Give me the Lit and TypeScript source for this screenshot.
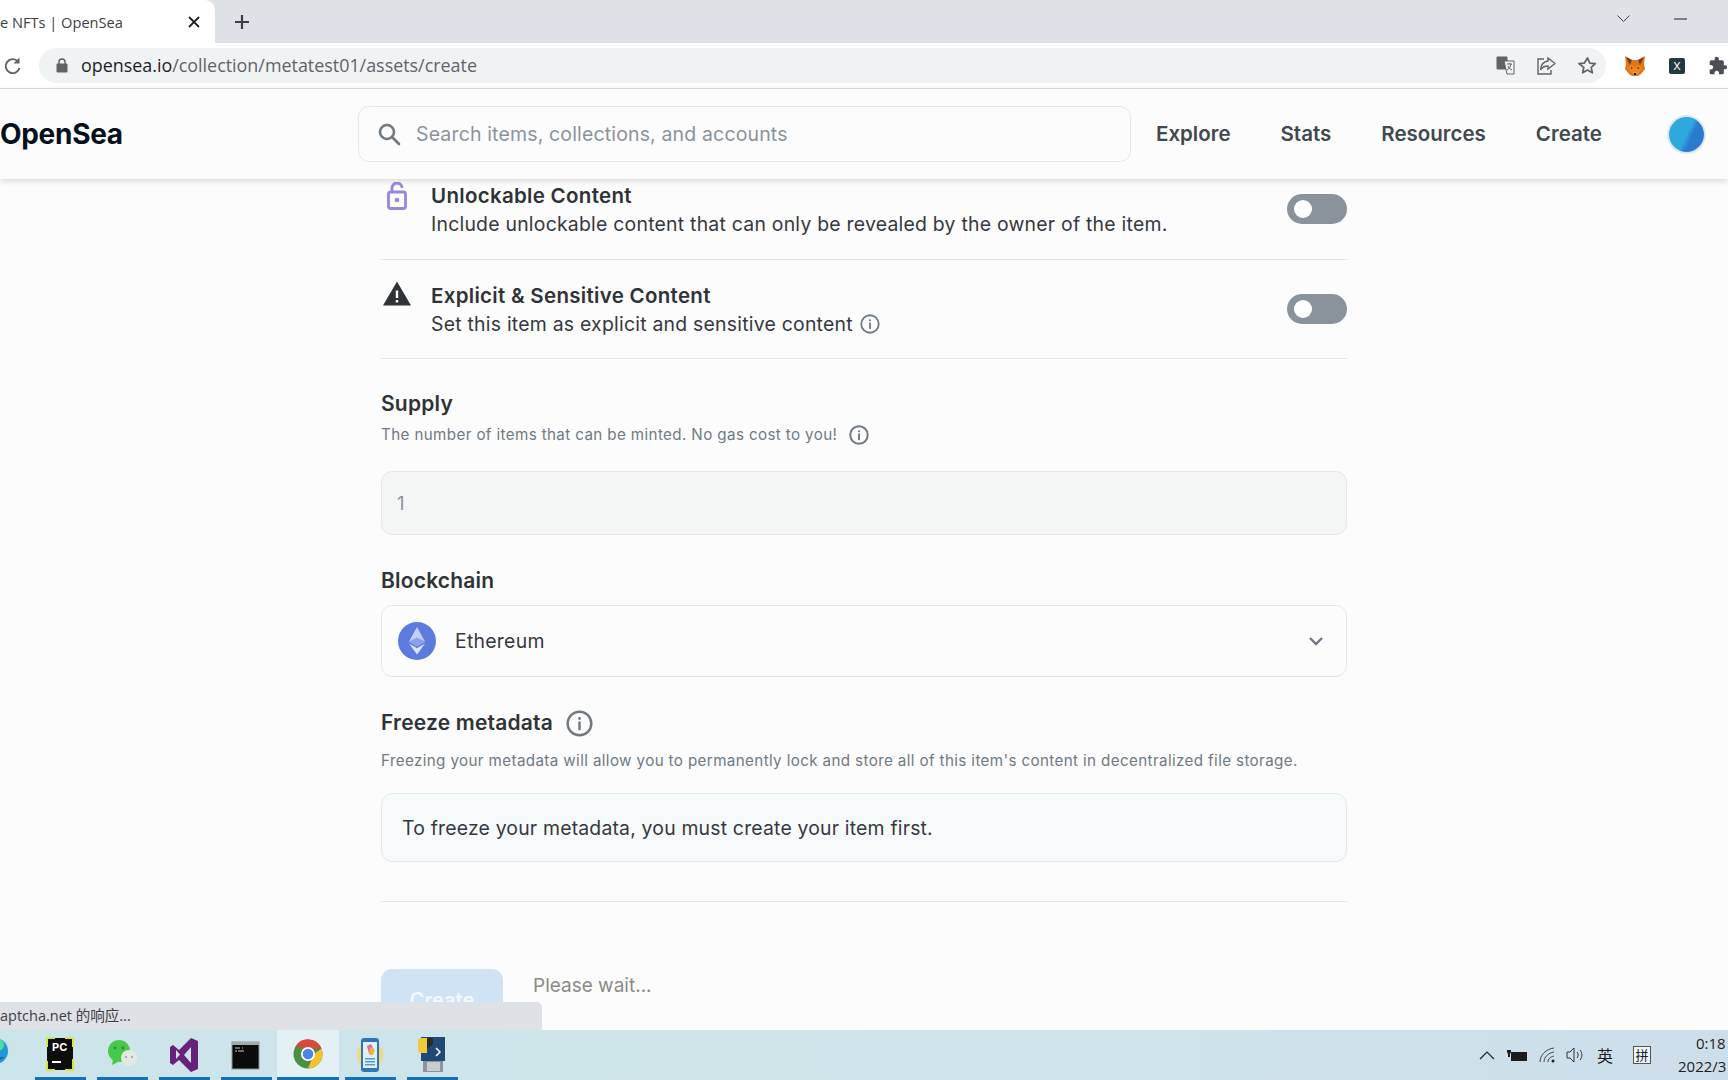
import { LitElement, css, html, svg } from "lit";
import { customElement } from "lit/decorators.js";

const infoIcon = (size: number, stroke = 2) => html`<svg class="info" width=${size} height=${size} viewBox="0 0 24 24" fill="none" stroke="#707a83" stroke-width=${stroke}>
    <circle cx="12" cy="12" r="10.500"></circle>
    <path d="M12 11v6" stroke-linecap="round"></path>
    <circle cx="12" cy="7.500" r="1.300" fill="#707a83" stroke="none"></circle>
</svg>`;

const taskIcons = [
    // edge, cut by the screen
    svg`<circle cx="12" cy="14" r="13" fill="#1f9ad6"/><path d="M0 16c4 8 14 10 22 4-6 1-12-1-13-6-4-2-8-1-9 2z" fill="#1c5ca8"/><circle cx="15" cy="8" r="6" fill="#4fdc9c"/>`,
    // pycharm
    svg`<rect x="2" y="1" width="26" height="32" fill="#0d0d0d"/><path d="M1 0h9v2H3v8H1zM20 0h9v10h-2V2h-7zM1 24h2v8h7v2H1zM27 22h2v12h-9v-2h7z" fill="#d7e63a"/><text x="7" y="14" font-size="11" font-weight="700" fill="#fff" font-family="Inter">PC</text><rect x="7" y="24" width="9" height="2" fill="#fff"/>`,
    // wechat
    svg`<ellipse cx="12" cy="14" rx="11" ry="11" fill="#45c94a"/><path d="M6 22l-1 6 6-3z" fill="#45c94a"/><circle cx="8" cy="11" r="1.400" fill="#2c8f31"/><circle cx="16" cy="11" r="1.400" fill="#2c8f31"/><ellipse cx="22" cy="21" rx="8" ry="8" fill="#e6e8e6"/><circle cx="19" cy="20" r="1" fill="#999"/><circle cx="25" cy="20" r="1" fill="#999"/>`,
    // visual studio
    svg`<path d="M22 1l7 3v28l-7 3-12-12-6 5-3-2V10l3-2 6 5zM7 13v9l4-4.500zM22 10l-7 8 7 8z" fill="#68217a" fill-rule="evenodd"/>`,
    // terminal
    svg`<rect x="1" y="5" width="27" height="27" fill="#0b0b0b" stroke="#8d9498" stroke-width="1"/><rect x="1" y="5" width="27" height="3" fill="#a3a9ad"/><path d="M4 11h5M11 11h1M4 14h2M7 14h6" stroke="#ccc" stroke-width="1"/>`,
    // chrome
    svg`<circle cx="15" cy="17" r="14.500" fill="#4b8f47"/><path d="M2.400 9.700A14.500 14.500 0 0 1 28.500 11.500H15z" fill="#d9483b"/><path d="M28.500 11.500A14.500 14.500 0 0 1 15 31.500L21 17z" fill="#f4c22f"/><circle cx="15" cy="17" r="7" fill="#fff"/><circle cx="15" cy="17" r="5.300" fill="#4a84e6"/>`,
    // phone app
    svg`<ellipse cx="15" cy="18" rx="13" ry="14" fill="#f1d97a"/><rect x="6" y="1" width="18" height="34" rx="3" fill="#2e76b8"/><rect x="8" y="5" width="14" height="26" fill="#e4eef6"/><path d="M12 9l4-2 3 6-5 4z" fill="#d96e9b"/><path d="M15 10l5 3-2 5h-4z" fill="#e8b93f"/><rect x="10" y="21" width="10" height="1.500" fill="#4d9ad8"/><rect x="10" y="24" width="10" height="1.500" fill="#4d9ad8"/><rect x="10" y="27" width="10" height="1.500" fill="#4d9ad8"/>`,
    // python idle
    svg`<rect x="4" y="0" width="24" height="24" fill="#1f4a78"/><path d="M1 4q0-3 4-3h5v15H5q-4 0-4-3z" fill="#efc93e"/><path d="M10 1h6v6l-6 5z" fill="#2a2a2a"/><path d="M19 11l4 4-4 4" fill="none" stroke="#fff" stroke-width="1.500"/><rect x="6" y="24" width="20" height="11" fill="#8e9499"/><rect x="10" y="25" width="13" height="9" fill="#c9cdd0"/>`,
];

@customElement("app-root")
export class AppRoot extends LitElement {
    static styles = css`
        :host {
            display: flex;
            flex-direction: column;
            position: relative;
            width: 1728px;
            height: 1080px;
            overflow: hidden;
            background: #fcfcfc;
            font-family: Inter, "Liberation Sans", sans-serif;
            color: #2f3337;
        }

        /* browser chrome */
        .tabstrip {
            height: 43px;
            flex: none;
            display: flex;
            align-items: stretch;
            background: #dee1e6;
            font-family: "Open Sans", sans-serif;
        }
        .tab {
            width: 215px;
            box-sizing: border-box;
            padding-right: 15px;
            display: flex;
            align-items: center;
            justify-content: space-between;
            background: #fff;
            border-top-right-radius: 10px;
            font-size: 14.600px;
            color: #3c4043;
        }
        .plus {
            margin-left: 19px;
            align-self: center;
        }
        .win-btns {
            margin-left: auto;
            display: flex;
            align-items: center;
            gap: 44px;
            padding-right: 41px;
            margin-top: -5px;
        }
        .toolbar {
            height: 46px;
            flex: none;
            box-sizing: border-box;
            display: flex;
            align-items: center;
            background: #fff;
            border-bottom: 1px solid #dadce0;
        }
        .reload {
            margin-left: 2px;
            width: 37px;
        }
        .omnibox {
            width: 1569px;
            height: 35px;
            box-sizing: border-box;
            padding: 0 16px 0 17px;
            display: flex;
            align-items: center;
            background: #f0f3f4;
            border-radius: 18px;
            font-family: "Open Sans", sans-serif;
            font-size: 17.900px;
            color: #5f6368;
        }
        .omnibox .url {
            margin-top: -2px;
        }
        .omnibox .host {
            color: #202124;
        }
        .omnibox .lock {
            margin-right: 13px;
        }
        .omni-icons {
            margin-left: auto;
            margin-right: -7px;
            display: flex;
            align-items: center;
            gap: 22px;
        }
        .ext {
            display: flex;
            align-items: center;
            gap: 23px;
            margin-left: 18px;
        }
        .ext-x {
            width: 16px;
            height: 16px;
            border-radius: 2px;
            background: #24383f;
            color: #fff;
            font-size: 11px;
            line-height: 16px;
            text-align: center;
        }

        /* site nav */
        .nav {
            height: 90px;
            flex: none;
            position: relative;
            z-index: 2;
            display: flex;
            align-items: center;
            background: #fcfcfc;
            box-shadow: 0 2px 6px rgba(0, 0, 0, 0.14);
        }
        .logo {
            width: 358px;
            flex: none;
            font-size: 28px;
            font-weight: 700;
            color: #04111d;
            letter-spacing: -0.3px;
            margin-top: -1px;
        }
        .search {
            width: 773px;
            height: 56px;
            flex: none;
            box-sizing: border-box;
            padding-left: 18px;
            display: flex;
            align-items: center;
            gap: 15px;
            background: #fcfcfc;
            border: 1px solid #e5e8eb;
            border-radius: 11px;
            font-size: 19.500px;
            letter-spacing: 0.15px;
            color: #8a939b;
        }
        .links {
            display: flex;
            gap: 50px;
            margin-left: 25px;
            margin-top: -2px;
            font-size: 20.500px;
            font-weight: 600;
            color: #42484e;
        }
        .avatar {
            width: 35px;
            height: 35px;
            margin-left: 67px;
            border-radius: 50%;
            background: linear-gradient(115deg, #2fa9dd 0 50%, #2a7bd0 62%);
            box-shadow: 0 0 0 2px #dfe7ea;
        }

        /* form */
        .main {
            flex: 1;
            min-height: 0;
            overflow: hidden;
        }
        .form {
            width: 966px;
            margin: -18px 0 0 381px;
        }
        .row {
            height: 98px;
            display: flex;
            align-items: center;
            border-bottom: 1px solid #e5e8eb;
        }
        .row-icon {
            width: 50px;
            flex: none;
            align-self: flex-start;
            box-sizing: border-box;
        }
        .row-icon.lock {
            padding: 21px 0 0 6px;
        }
        .row-icon.warn {
            padding: 21px 0 0 2px;
        }
        .row-text {
            flex: 1;
        }
        .row-text.low {
            padding-top: 2px;
        }
        .row-title {
            font-size: 20.500px;
            font-weight: 600;
            line-height: 28px;
            letter-spacing: 0.3px;
        }
        .row-sub {
            display: flex;
            align-items: center;
            gap: 7px;
            margin-top: -1px;
            font-size: 19.400px;
            line-height: 30px;
            letter-spacing: 0.24px;
            color: #353840;
        }
        .toggle {
            width: 60px;
            height: 30px;
            flex: none;
            box-sizing: border-box;
            padding: 6px 7px;
            background: #8a939b;
            border-radius: 15px;
        }
        .toggle.high {
            margin-top: -2px;
        }
        .toggle span {
            display: block;
            width: 18px;
            height: 18px;
            border-radius: 50%;
            background: #fff;
        }
        h3 {
            margin: 0;
            font-size: 21px;
            font-weight: 600;
            line-height: 28px;
            letter-spacing: 0.2px;
            display: flex;
            align-items: center;
        }
        .supply-title {
            margin-top: 31px;
        }
        .desc {
            display: flex;
            align-items: center;
            gap: 12px;
            font-size: 15.200px;
            line-height: 24px;
            letter-spacing: 0.37px;
            color: #707a83;
        }
        .supply-desc {
            margin-top: 5px;
        }
        .input {
            margin-top: 24px;
            height: 64px;
            box-sizing: border-box;
            padding-left: 15px;
            display: flex;
            align-items: center;
            background: #f4f6f5;
            border: 1px solid #e5e8eb;
            border-radius: 11px;
            font-size: 18.500px;
            color: #8a939b;
        }
        .section {
            margin-top: 32px;
        }
        .select {
            margin-top: 10px;
            height: 72px;
            box-sizing: border-box;
            padding: 0 22px 0 16px;
            display: flex;
            align-items: center;
            gap: 19px;
            border: 1px solid #e5e8eb;
            border-radius: 11px;
            font-size: 19.400px;
            letter-spacing: 0.27px;
            color: #353840;
        }
        .select .chev {
            margin-left: auto;
        }
        .freeze-title {
            gap: 13px;
        }
        .freeze-desc {
            margin-top: 12px;
        }
        .notice {
            margin-top: 20px;
            height: 69px;
            box-sizing: border-box;
            padding-left: 20px;
            display: flex;
            align-items: center;
            background: #f7fafb;
            border: 1px solid #e5e8eb;
            border-radius: 11px;
            font-size: 19.400px;
            letter-spacing: 0.19px;
            color: #353840;
        }
        .rule {
            margin-top: 39px;
            border-top: 1px solid #e5e8eb;
        }
        .actions {
            margin-top: 67px;
            display: flex;
            gap: 30px;
        }
        .create {
            width: 122px;
            height: 62px;
            box-sizing: border-box;
            padding-top: 19px;
            border-radius: 11px;
            background: #cfe3f5;
            color: #f3f8fc;
            font-size: 20px;
            font-weight: 600;
            text-align: center;
        }
        .wait {
            margin-top: 1px;
            font-size: 19px;
            line-height: 32px;
            color: #8c8a85;
        }

        /* status bubble over the page */
        .status {
            position: absolute;
            left: 0;
            top: 1002px;
            width: 542px;
            height: 28px;
            z-index: 3;
            box-sizing: border-box;
            line-height: 28px;
            background: #dee1e6;
            border-top-right-radius: 5px;
            font-family: "Open Sans", "Noto Sans CJK SC", sans-serif;
            font-size: 14.500px;
            color: #3c4043;
        }

        /* windows taskbar */
        .taskbar {
            height: 50px;
            flex: none;
            position: relative;
            z-index: 4;
            display: flex;
            background: linear-gradient(90deg, #cbe4ea, #cfe5ea 45%, #cddeea);
        }
        .slots {
            display: flex;
            margin-left: -33px;
        }
        .slot {
            width: 62px;
            height: 50px;
            box-sizing: border-box;
            position: relative;
            display: flex;
            justify-content: center;
            padding-top: 7px;
        }
        .slot.active {
            background: #e4f1f4;
        }
        .slot::after {
            content: "";
            position: absolute;
            left: 6px;
            right: 5px;
            bottom: 0;
            height: 3px;
            background: #0f72bd;
        }
        .slot.active::after {
            left: 0;
            right: 0;
        }
        .slot.plain::after {
            display: none;
        }
        .tray {
            margin-left: auto;
            display: flex;
            align-items: center;
            gap: 11px;
            font-family: "Noto Sans CJK SC", sans-serif;
            color: #1c1c1c;
        }
        .tray .battery {
            margin-left: 1px;
        }
        .tray .wifi {
            margin-left: 1px;
        }
        .tray .volume {
            margin-left: -2px;
        }
        .ime {
            font-size: 16px;
        }
        .ime-box {
            width: 18px;
            height: 18px;
            margin-left: 9px;
            box-sizing: border-box;
            border: 1px solid #555;
            background: #eef3f6;
            font-size: 13px;
            line-height: 16px;
            text-align: center;
        }
        .clock {
            width: 50px;
            margin-left: 16px;
            overflow: hidden;
            font-family: "Open Sans", sans-serif;
            font-size: 15px;
            line-height: 23px;
            white-space: nowrap;
        }
        .clock div:first-child {
            padding-left: 18px;
        }
    `;

    render() {
        return html`
            ${this.renderChrome()}
            ${this.renderNav()}
            <div class="main">
                <div class="form">
                    <div class="row">
                        <div class="row-icon lock">
                            <svg width="20" height="28" viewBox="0 0 20 28" fill="none" stroke="#9c86dd" stroke-width="2.800">
                                <rect x="1.500" y="10" width="17" height="16.500" rx="2"></rect>
                                <path d="M5 10V6a5 5 0 0 1 10 0"></path>
                                <circle cx="10" cy="18" r="2.300" fill="#9c86dd" stroke="none"></circle>
                            </svg>
                        </div>
                        <div class="row-text">
                            <div class="row-title">Unlockable Content</div>
                            <div class="row-sub">Include unlockable content that can only be revealed by the owner of the item.</div>
                        </div>
                        <div class="toggle high"><span></span></div>
                    </div>
                    <div class="row">
                        <div class="row-icon warn">
                            <svg width="28" height="25" viewBox="0 0 28 24">
                                <path d="M14 0L28 24H0zM12.800 9v7.500h2.400V9zM12.800 18.500v2.400h2.400v-2.400z" fill="#2f3337" fill-rule="evenodd"></path>
                            </svg>
                        </div>
                        <div class="row-text low">
                            <div class="row-title">Explicit &amp; Sensitive Content</div>
                            <div class="row-sub">Set this item as explicit and sensitive content ${infoIcon(20, 2.2)}</div>
                        </div>
                        <div class="toggle"><span></span></div>
                    </div>

                    <h3 class="supply-title">Supply</h3>
                    <div class="desc supply-desc">The number of items that can be minted. No gas cost to you! ${infoIcon(20, 2.4)}</div>
                    <div class="input">1</div>

                    <h3 class="section">Blockchain</h3>
                    <div class="select">
                        <svg width="38" height="38" viewBox="0 0 38 38">
                            <circle cx="19" cy="19" r="19" fill="#5b7cdc"></circle>
                            <path d="M19 5l-8 14.500 8 4.700 8-4.700z" fill="#c3cff5"></path>
                            <path d="M19 15.500l-8 4 8 4.700 8-4.700z" fill="#8ba0ec"></path>
                            <path d="M11 21.500l8 11 8-11-8 4.700z" fill="#dfe5fb"></path>
                        </svg>
                        <span>Ethereum</span>
                        <svg class="chev" width="16" height="10" viewBox="0 0 16 10" fill="none" stroke="#707a83" stroke-width="2.400">
                            <path d="M2 2l6 6 6-6"></path>
                        </svg>
                    </div>

                    <h3 class="section freeze-title">Freeze metadata ${infoIcon(27, 2.2)}</h3>
                    <div class="desc freeze-desc">Freezing your metadata will allow you to permanently lock and store all of this item's content in decentralized file storage.</div>
                    <div class="notice">To freeze your metadata, you must create your item first.</div>
                    <div class="rule"></div>

                    <div class="actions">
                        <div class="create">Create</div>
                        <div class="wait">Please wait...</div>
                    </div>
                </div>
            </div>
            <div class="status">aptcha.net 的响应...</div>
            ${this.renderTaskbar()}
        `;
    }

    renderChrome() {
        return html`
            <div class="tabstrip">
                <div class="tab">
                    <span>e NFTs | OpenSea</span>
                    <svg width="12" height="12" viewBox="0 0 12 12" stroke="#202124" stroke-width="1.800"><path d="M1 1l10 10M11 1L1 11"></path></svg>
                </div>
                <svg class="plus" width="16" height="16" viewBox="0 0 16 16" stroke="#3c4043" stroke-width="2.200"><path d="M8 1v14M1 8h14"></path></svg>
                <div class="win-btns">
                    <svg width="13" height="8" viewBox="0 0 13 8" fill="none" stroke="#3c4043"><path d="M.5.500l6 6 6-6"></path></svg>
                    <svg width="13" height="2" viewBox="0 0 13 2" stroke="#202124"><path d="M0 1h13"></path></svg>
                </div>
            </div>
            <div class="toolbar">
                <svg class="reload" width="37" height="20" viewBox="0 0 37 20" fill="none" stroke="#5f6368" stroke-width="1.900">
                    <path d="M16 5.500A7 7 0 1 0 17.500 12"></path>
                    <path d="M17.500 1.500v6h-6z" fill="#5f6368" stroke="none"></path>
                </svg>
                <div class="omnibox">
                    <svg class="lock" width="12" height="15" viewBox="0 0 12 15" fill="#5f6368">
                        <rect x="0.500" y="5.500" width="11" height="9" rx="1"></rect>
                        <path d="M3 6V4a3 3 0 0 1 6 0v2" fill="none" stroke="#5f6368" stroke-width="1.500"></path>
                    </svg>
                    <span class="url"><span class="host">opensea.io</span>/collection/metatest01/assets/create</span>
                    <div class="omni-icons">
                        <svg width="19" height="19" viewBox="0 0 19 19">
                            <rect x="0.500" y="0.500" width="11" height="13" rx="1" fill="#5f6368"></rect>
                            <path d="M8 5h10v13H11z" fill="#f0f3f4" stroke="#5f6368"></path>
                            <path d="M11 8h5M13.500 7v1M15 8c-.5 3-2 5-4 6M12 10c.5 2 2 3 4 4" fill="none" stroke="#5f6368" stroke-width="1"></path>
                        </svg>
                        <svg width="19" height="19" viewBox="0 0 19 19" fill="none" stroke="#5f6368" stroke-width="1.400">
                            <path d="M11 2l7 5.500-7 5.500V10C7 10 5 11.500 3.500 14 4 9 7 5.500 11 5z"></path>
                            <path d="M7 3H1v15h13v-4"></path>
                        </svg>
                        <svg width="19" height="19" viewBox="0 0 24 24" fill="none" stroke="#5f6368" stroke-width="2.200" stroke-linejoin="round">
                            <path d="M12 2.500l2.900 6.400 7 .8-5.200 4.700 1.400 6.900-6.100-3.500-6.100 3.500 1.400-6.900L1.100 9.700l7-.8z"></path>
                        </svg>
                    </div>
                </div>
                <div class="ext">
                    <svg width="22" height="20" viewBox="0 0 20 20">
                        <path d="M0 0l7 4h6l7-4-1 8 1 5-4 5-3 2H7l-3-2-4-5 1-5z" fill="#e2761b"></path>
                        <path d="M1 1l6 3-2 5zM19 1l-6 3 2 5z" fill="#763d16"></path>
                        <path d="M3 12l4-3 3 3 3-3 4 3-4 6H7z" fill="#f6851b"></path>
                        <path d="M8 16l2 2 2-2z" fill="#c0ad9e"></path>
                        <path d="M6 11l2 1-2 1zM14 11l-2 1 2 1z" fill="#233447"></path>
                        <path d="M9 17h2v2H9z" fill="#161616"></path>
                    </svg>
                    <div class="ext-x">X</div>
                    <svg width="20" height="20" viewBox="0 0 24 24" fill="#4b4f54">
                        <path d="M20.500 11H19V7c0-1.100-.9-2-2-2h-4V3.500C13 2.120 11.880 1 10.500 1S8 2.120 8 3.500V5H4c-1.100 0-1.990.9-1.990 2v3.800H3.500c1.490 0 2.700 1.210 2.700 2.700s-1.210 2.700-2.700 2.700H2V20c0 1.100.9 2 2 2h3.800v-1.500c0-1.490 1.210-2.700 2.700-2.700 1.490 0 2.700 1.210 2.700 2.700V22H17c1.100 0 2-.9 2-2v-4h1.500c1.380 0 2.500-1.120 2.500-2.500S21.880 11 20.500 11z"></path>
                    </svg>
                </div>
            </div>
        `;
    }

    renderNav() {
        return html`
            <div class="nav">
                <div class="logo">OpenSea</div>
                <div class="search">
                    <svg width="24" height="24" viewBox="0 0 24 24" fill="none" stroke="#707a83" stroke-width="2.600">
                        <circle cx="10" cy="10" r="7"></circle>
                        <path d="M15 15l7 7" stroke-linecap="round"></path>
                    </svg>
                    <span>Search items, collections, and accounts</span>
                </div>
                <div class="links">
                    <span>Explore</span>
                    <span>Stats</span>
                    <span>Resources</span>
                    <span>Create</span>
                </div>
                <div class="avatar"></div>
            </div>
        `;
    }

    renderTaskbar() {
        return html`
            <div class="taskbar">
                <div class="slots">
                    ${taskIcons.map(
                        (icon, i) => html`<div class="slot ${i === 5 ? "active" : ""} ${i === 0 ? "plain" : ""}">
                            <svg width="30" height="36" viewBox="0 0 30 36">${icon}</svg>
                        </div>`
                    )}
                </div>
                <div class="tray">
                    <svg width="16" height="9" viewBox="0 0 16 9" fill="none" stroke="#222" stroke-width="1.200"><path d="M1 8l7-7 7 7"></path></svg>
                    <svg class="battery" width="20" height="14" viewBox="0 0 20 14" fill="#1c1c1c">
                        <path d="M4 4h16v9H4z"></path><path d="M1 0v2M3 0v2M0 2h4v2L3 6v3H1V6L0 4z"></path>
                    </svg>
                    <svg class="wifi" width="18" height="16" viewBox="0 0 18 16" fill="none" stroke="#444" stroke-width="1">
                        <path d="M1 15C1 8 7 2 15 1M5 15c0-5 4-9 10-10M9 15c0-3 2-5 6-6"></path>
                        <circle cx="14" cy="14" r="1.500" fill="#222" stroke="none"></circle>
                    </svg>
                    <svg class="volume" width="20" height="16" viewBox="0 0 20 16" fill="none" stroke="#333" stroke-width="1">
                        <path d="M1 5h3l4-4v14l-4-4H1z"></path><path d="M11 5c1.500 2 1.500 4 0 6M14 3c2.500 3 2.500 7 0 10"></path>
                    </svg>
                    <span class="ime">英</span>
                    <span class="ime-box">拼</span>
                    <div class="clock">
                        <div>0:18</div>
                        <div>2022/3</div>
                    </div>
                </div>
            </div>
        `;
    }
}
